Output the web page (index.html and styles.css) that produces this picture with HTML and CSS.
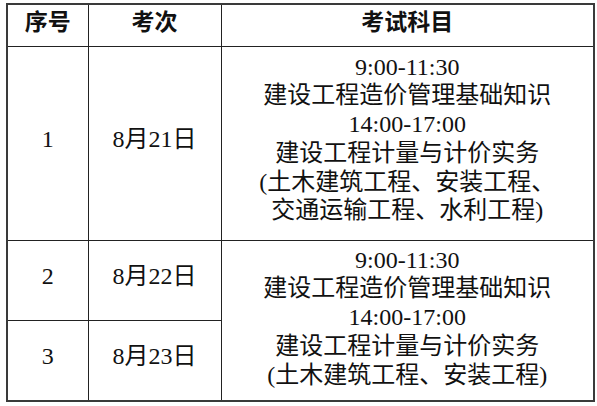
FILE: index.html
```html
<!DOCTYPE html>
<html lang="zh-CN">
<head>
<meta charset="utf-8">
<title>考试安排</title>
<link rel="stylesheet" href="styles.css">
</head>
<body>
<table class="exam">
  <colgroup>
    <col class="c-no">
    <col class="c-date">
    <col class="c-subj">
  </colgroup>
  <thead>
    <tr class="head">
      <th>序号</th>
      <th>考次</th>
      <th>考试科目</th>
    </tr>
  </thead>
  <tbody>
    <tr class="r1">
      <td class="mid">1</td>
      <td class="mid">8月21日</td>
      <td class="subj subj-1">
        <div class="ln">9:00-11:30</div>
        <div class="ln">建设工程造价管理基础知识</div>
        <div class="ln">14:00-17:00</div>
        <div class="ln">建设工程计量与计价实务</div>
        <div class="ln">(土木建筑工程、安装工程、</div>
        <div class="ln">交通运输工程、水利工程)</div>
      </td>
    </tr>
    <tr class="r2">
      <td class="mid">2</td>
      <td class="mid">8月22日</td>
      <td class="subj subj-2" rowspan="2">
        <div class="ln">9:00-11:30</div>
        <div class="ln">建设工程造价管理基础知识</div>
        <div class="ln">14:00-17:00</div>
        <div class="ln">建设工程计量与计价实务</div>
        <div class="ln">(土木建筑工程、安装工程)</div>
      </td>
    </tr>
    <tr class="r3">
      <td class="mid">3</td>
      <td class="mid">8月23日</td>
    </tr>
  </tbody>
</table>
</body>
</html>
```

FILE: styles.css
```css
html, body {
  margin: 0;
  padding: 0;
  background: #ffffff;
}

body {
  padding: 3px 0 0 6px;
  font-family: "Liberation Serif", "Noto Sans CJK SC", serif;
  font-size: 24px;
  line-height: 28.8px;
  color: #111;
}

.exam {
  border-collapse: collapse;
  table-layout: fixed;
  width: 587px;
  border: 2px solid #3a3a3a;
}

.c-no { width: 81px; }
.c-date { width: 133px; }
.c-subj { width: 373px; }

.exam th,
.exam td {
  border: 1px solid #222;
  padding: 0;
  text-align: center;
}

.head {
  height: 42px;
}

.exam .head th {
  font-family: "Noto Sans CJK SC", sans-serif;
  font-weight: 700;
  font-size: 23px;
  line-height: 28px;
  vertical-align: middle;
  padding-bottom: 10px;
}

.r1 { height: 194px; }
.r2 { height: 80px; }
.r3 { height: 81px; }

.exam td.mid {
  vertical-align: middle;
  padding-bottom: 8px;
}

.exam td.subj {
  vertical-align: top;
}

.exam td.subj-1 {
  padding-top: 6px;
}

.exam td.subj-2 {
  padding-top: 5px;
}

.ln {
  white-space: nowrap;
}
```
